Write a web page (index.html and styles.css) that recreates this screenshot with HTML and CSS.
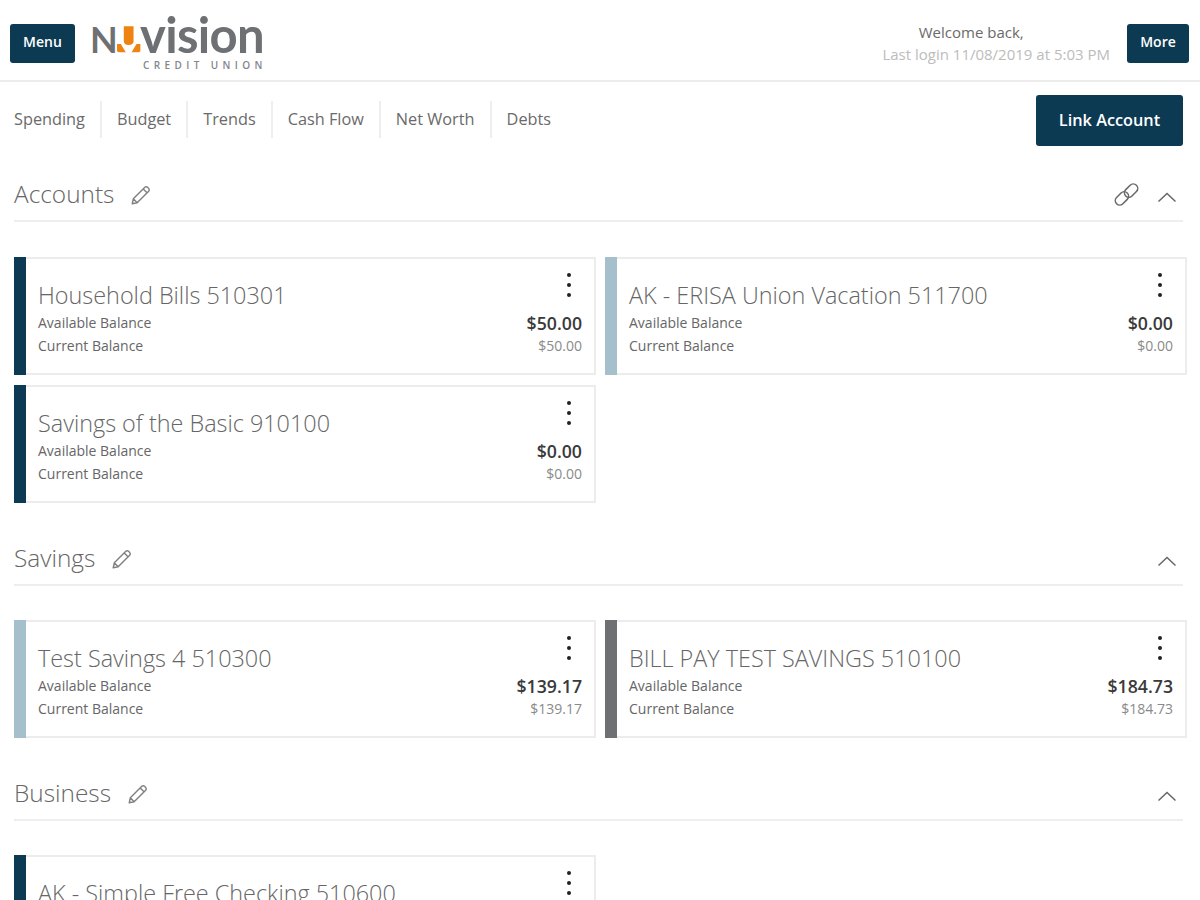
FILE: index.html
```html
<!DOCTYPE html>
<html lang="en">
<head>
<meta charset="utf-8">
<title>Nuvision Credit Union</title>
<link rel="stylesheet" href="styles.css">
</head>
<body>
<header class="topbar">
  <div class="topbar-left">
    <button class="btn btn-small">Menu</button>
    <div class="logo">
      <div class="logo-word"><span class="logo-n">N</span><svg class="logo-u" viewBox="0 0 26 28"><title>U</title><path d="M8 0H18V15Q18 19 13 19Q8 19 8 15Z" fill="#ee8312"/><path d="M1 18L5 18L10 26.500L3 26.500Q1 26.500 1 24.500Z" fill="#ee8312"/><path d="M25 18L21 18L16 26.500L23 26.500Q25 26.500 25 24.500Z" fill="#ee8312"/></svg>vision</div>
      <div class="logo-sub">CREDIT UNION</div>
    </div>
  </div>
  <div class="topbar-right">
    <div class="welcome">
      <div class="welcome-line">Welcome back,</div>
      <div class="login-line">Last login 11/08/2019 at 5:03 PM</div>
    </div>
    <button class="btn btn-small">More</button>
  </div>
</header>
<nav class="subnav">
  <ul class="tabs">
    <li class="tab">Spending</li>
    <li class="tab">Budget</li>
    <li class="tab">Trends</li>
    <li class="tab">Cash Flow</li>
    <li class="tab">Net Worth</li>
    <li class="tab">Debts</li>
  </ul>
  <button class="btn btn-large">Link Account</button>
</nav>
<main class="content">
  <section class="group group-first">
    <div class="group-head">
      <h2 class="group-title">Accounts</h2>
      <svg class="icon-pencil" viewBox="0 0 20 20"><path d="M2 18l1-4.500L13.500 3a1.800 1.800 0 0 1 2.500 0l1 1a1.800 1.800 0 0 1 0 2.500L6.500 17zM3 13.500L6.500 17M12 4.500l3.500 3.500"/></svg>
      <div class="group-actions">
        <svg class="icon-link" viewBox="0 0 24 24"><g transform="rotate(-45 12 12)"><rect x="-1" y="7.300" width="14.500" height="8.500" rx="4.250"/><rect x="10.500" y="8.200" width="14.500" height="8.500" rx="4.250"/></g></svg>
        <svg class="icon-chevron" viewBox="0 0 20 12"><path d="M1.500 10.500L10 2.500L18.500 10.500"/></svg>
      </div>
    </div>
    <div class="cards cards-first">
      <article class="card bar-navy"><div class="card-top"><h3 class="card-title">Household Bills 510301</h3><span class="kebab"><i></i><i></i><i></i></span></div><div class="row"><span>Available Balance</span><b class="amount">$50.00</b></div><div class="row"><span>Current Balance</span><span class="sub">$50.00</span></div></article>
      <article class="card bar-light"><div class="card-top"><h3 class="card-title">AK - ERISA Union Vacation 511700</h3><span class="kebab"><i></i><i></i><i></i></span></div><div class="row"><span>Available Balance</span><b class="amount">$0.00</b></div><div class="row"><span>Current Balance</span><span class="sub">$0.00</span></div></article>
      <article class="card bar-navy"><div class="card-top"><h3 class="card-title">Savings of the Basic 910100</h3><span class="kebab"><i></i><i></i><i></i></span></div><div class="row"><span>Available Balance</span><b class="amount">$0.00</b></div><div class="row"><span>Current Balance</span><span class="sub">$0.00</span></div></article>
    </div>
  </section>
  <section class="group">
    <div class="group-head">
      <h2 class="group-title">Savings</h2>
      <svg class="icon-pencil" viewBox="0 0 20 20"><path d="M2 18l1-4.500L13.500 3a1.800 1.800 0 0 1 2.500 0l1 1a1.800 1.800 0 0 1 0 2.500L6.500 17zM3 13.500L6.500 17M12 4.500l3.500 3.500"/></svg>
      <div class="group-actions">
        <svg class="icon-chevron" viewBox="0 0 20 12"><path d="M1.500 10.500L10 2.500L18.500 10.500"/></svg>
      </div>
    </div>
    <div class="cards">
      <article class="card bar-light"><div class="card-top"><h3 class="card-title">Test Savings 4 510300</h3><span class="kebab"><i></i><i></i><i></i></span></div><div class="row"><span>Available Balance</span><b class="amount">$139.17</b></div><div class="row"><span>Current Balance</span><span class="sub">$139.17</span></div></article>
      <article class="card bar-gray"><div class="card-top"><h3 class="card-title">BILL PAY TEST SAVINGS 510100</h3><span class="kebab"><i></i><i></i><i></i></span></div><div class="row"><span>Available Balance</span><b class="amount">$184.73</b></div><div class="row"><span>Current Balance</span><span class="sub">$184.73</span></div></article>
    </div>
  </section>
  <section class="group">
    <div class="group-head">
      <h2 class="group-title">Business</h2>
      <svg class="icon-pencil" viewBox="0 0 20 20"><path d="M2 18l1-4.500L13.500 3a1.800 1.800 0 0 1 2.500 0l1 1a1.800 1.800 0 0 1 0 2.500L6.500 17zM3 13.500L6.500 17M12 4.500l3.500 3.500"/></svg>
      <div class="group-actions">
        <svg class="icon-chevron" viewBox="0 0 20 12"><path d="M1.500 10.500L10 2.500L18.500 10.500"/></svg>
      </div>
    </div>
    <div class="cards">
      <article class="card bar-navy"><div class="card-top"><h3 class="card-title">AK - Simple Free Checking 510600</h3><span class="kebab"><i></i><i></i><i></i></span></div><div class="row"><span>Available Balance</span><b class="amount">$0.00</b></div><div class="row"><span>Current Balance</span><span class="sub">$0.00</span></div></article>
    </div>
  </section>
</main>
</body>
</html>
```

FILE: styles.css
```css
* { box-sizing: border-box; }
html, body { margin: 0; height: 900px; overflow: hidden; background: #fff; }
body { font-family: "Open Sans", sans-serif; color: #555; }
.topbar { height: 82px; border-bottom: 2px solid #ececec; display: flex; justify-content: space-between; align-items: flex-start; padding: 0 11px 0 10px; }
.topbar-left { display: flex; align-items: flex-start; }
.topbar-right { display: flex; align-items: flex-start; gap: 17px; }
.btn { border: 0; background: #0c3a52; color: #fff; font-family: "Open Sans", sans-serif; font-weight: 600; border-radius: 3px; padding: 0; }
.btn-small { width: 65px; height: 39px; margin-top: 24px; font-size: 14px; padding-bottom: 4px; }
.topbar-right .btn-small { width: 62px; }
.btn-large { width: 147px; height: 51px; font-size: 16.300px; padding-bottom: 2px; }
.logo { margin-left: 15px; margin-top: 4px; width: 174px; }
.logo-word { display: flex; align-items: baseline; font-family: "Lato", sans-serif; font-weight: 700; font-size: 49px; line-height: 60px; height: 58px; letter-spacing: -0.700px; color: #6f7073; white-space: nowrap; }
.logo-n { font-size: 36px; letter-spacing: 0; }
.logo-u { width: 26px; height: 28px; margin: 0 -1px 0 -2px; position: relative; top: 1px; }
.logo-sub { font-size: 10px; line-height: 12px; margin-top: -3px; letter-spacing: 4.400px; color: #85868a; font-weight: 600; white-space: nowrap; padding-left: 53px; }
.welcome { text-align: center; margin-top: 21px; font-size: 15px; line-height: 22px; }
.welcome-line { color: #6a6a6a; padding-right: 50px; }
.login-line { color: #bcbcbc; }
.subnav { height: 76px; display: flex; justify-content: space-between; padding: 13px 17px 0 0; }
.tabs { list-style: none; margin: 6px 0 0; padding: 0; display: flex; height: 37px; }
.tab { padding: 0 15px; font-size: 16.300px; line-height: 36px; color: #6a6a6a; border-right: 2px solid #eeeeee; white-space: nowrap; }
.tab:first-child { padding-left: 14px; }
.tab:last-child { border-right: 0; }
.content { padding: 0 13px 0 14px; }
.group { margin-top: 31px; }
.group-first { margin-top: 12px; }
.group-head { height: 52px; border-bottom: 2px solid #eeeeee; display: flex; align-items: center; margin-right: 4px; }
.group-title { font-size: 24.400px; font-weight: 300; line-height: 50px; margin: 0 0 2px; color: #666; }
.icon-pencil { width: 22px; height: 22px; margin-left: 16px; fill: none; stroke: #808080; stroke-width: 1.300; stroke-linejoin: round; }
.group-actions { margin-left: auto; margin-right: 6px; display: flex; align-items: center; gap: 18px; }
.icon-link { width: 25px; height: 25px; fill: none; stroke: #6a6a6a; stroke-width: 1.500; margin-bottom: 2px; }
.icon-chevron { width: 20px; height: 12px; margin-top: 4px; fill: none; stroke: #666; stroke-width: 1.500; }
.cards { display: grid; grid-template-columns: 582px 582px; column-gap: 9px; row-gap: 10px; margin-top: 34px; }
.cards-first { margin-top: 35px; }
.card { height: 118px; background: #fff; border-left: 12px solid #999; box-shadow: inset 0 2px 0 #ececec, inset -2px 0 0 #ececec, inset 0 -2px 0 #ececec; padding: 12px 14px 0 12px; }
.bar-navy { border-left-color: #0c3a52; }
.bar-light { border-left-color: #a6bfcc; }
.bar-gray { border-left-color: #6f7073; }
.card-top { display: flex; justify-content: space-between; height: 42px; align-items: flex-start; }
.card-title { margin: 10px 0 0; font-size: 23.400px; font-weight: 300; line-height: 32px; color: #666; white-space: nowrap; }
.kebab { display: flex; flex-direction: column; gap: 6px; margin: 4px 11px 0 0; }
.kebab i { display: block; width: 4px; height: 4px; border-radius: 50%; background: #222; }
.row { display: flex; justify-content: space-between; align-items: center; height: 23px; font-size: 14px; color: #666; }
.amount { font-size: 17.700px; font-weight: 600; color: #3a3a3a; }
.sub { font-size: 14px; color: #8a8a8a; }
```
